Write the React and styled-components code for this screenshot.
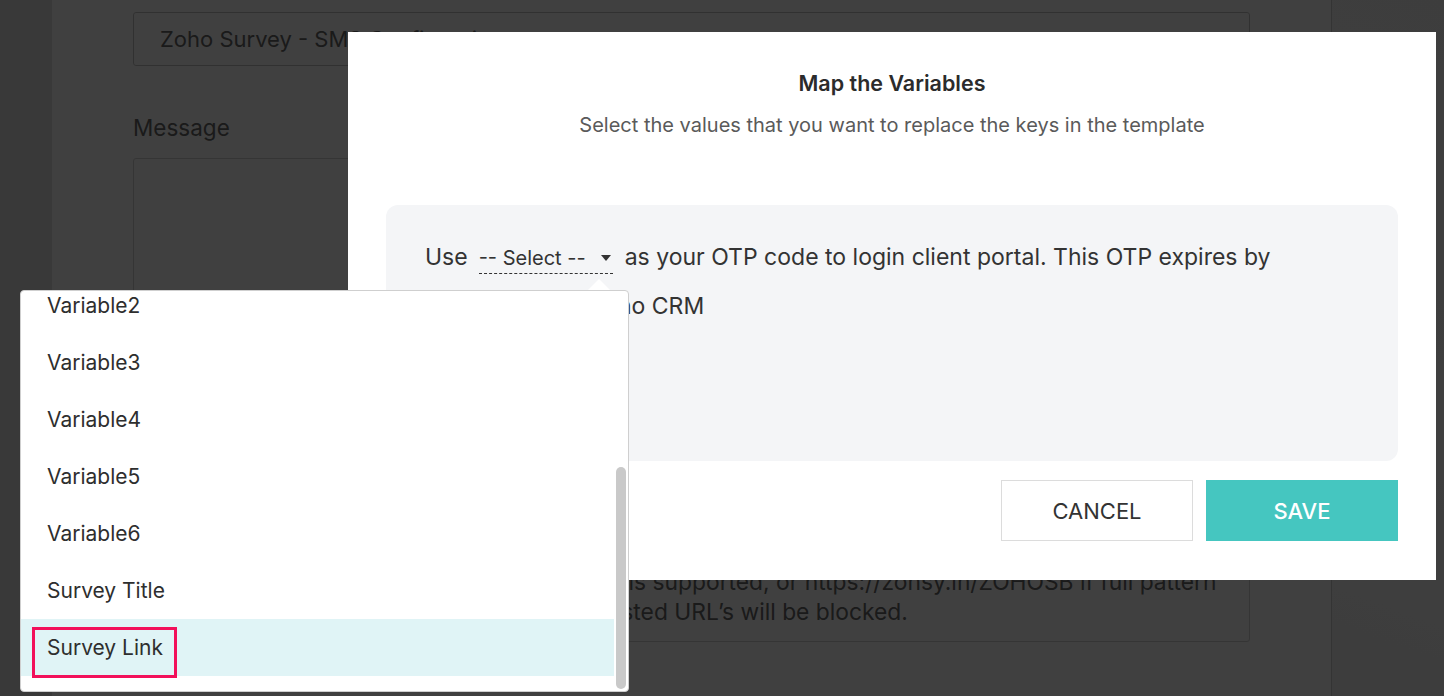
import React from 'react';
import styled, { createGlobalStyle } from 'styled-components';

const GlobalStyle = createGlobalStyle`
  body {
    margin: 0;
    font-family: 'Inter', 'Noto Sans', sans-serif;
    color: #333;
  }
`;

const Page = styled.div`
  position: relative;
  width: 1444px;
  height: 696px;
  overflow: hidden;
  display: flex;
  background: #fff;
`;

const Sidebar = styled.div`
  width: 52px;
  flex-shrink: 0;
  background: #e4e4e4;
`;

const Main = styled.div`
  flex: 1;
  display: flex;
  flex-direction: column;
  padding: 12px 0 0 81px;
`;

const Field = styled.div`
  width: 1117px;
  height: 54px;
  box-sizing: border-box;
  border: 1px solid #c4c4c4;
  border-radius: 3px;
  display: flex;
  align-items: center;
  padding-left: 26px;
  font-size: 22px;
  color: #6a6a6a;
`;

const Label = styled.div`
  margin-top: 48px;
  font-size: 22.5px;
  color: #6a6a6a;
`;

const TextArea = styled.div`
  margin-top: 17px;
  width: 1117px;
  height: 484px;
  box-sizing: border-box;
  border: 1px solid #d4d4d4;
  border-radius: 3px;
  display: flex;
  flex-direction: column;
  justify-content: flex-end;
  padding: 0 0 14px 26px;
  font-size: 22.8px;
  line-height: 30px;
  color: #6a6a6a;
  white-space: nowrap;
`;

const RightRail = styled.div`
  width: 112px;
  flex-shrink: 0;
  border-left: 1px solid #d0d0d0;
  background: linear-gradient(200deg, #f4f4f4 0%, #fafafa 60%, #f2f2f2 100%);
`;

const Backdrop = styled.div`
  position: absolute;
  inset: 0;
  background: rgba(0, 0, 0, 0.75);
`;

const Modal = styled.div`
  position: absolute;
  left: 348px;
  top: 32px;
  width: 1088px;
  height: 548px;
  box-sizing: border-box;
  background: #fff;
  padding: 38px 38px 39px;
  display: flex;
  flex-direction: column;
`;

const Title = styled.h2`
  margin: 0;
  text-align: center;
  font-size: 21.5px;
  font-weight: 600;
  color: #2b2b2b;
  line-height: 26px;
`;

const Subtitle = styled.p`
  margin: 16px 0 0;
  text-align: center;
  font-size: 20px;
  color: #5a5a5a;
  line-height: 26px;
`;

const Template = styled.div`
  margin-top: 67px;
  height: 256px;
  box-sizing: border-box;
  background: #f4f5f7;
  border-radius: 12px;
  padding: 28px 39px;
  font-size: 23px;
  line-height: 49px;
  color: #333;
  white-space: nowrap;
`;

const Picker = styled.span`
  display: inline-flex;
  align-items: center;
  gap: 15px;
  margin: 0 12px 0 11px;
  line-height: 30px;
  border-bottom: 1px dashed #333;
  font-size: 20px;
`;

const Caret = styled.span`
  width: 0;
  height: 0;
  border-left: 5px solid transparent;
  border-right: 5px solid transparent;
  border-top: 6px solid #333;
  margin-right: 2px;
`;

const Actions = styled.div`
  margin-top: 19px;
  display: flex;
  justify-content: flex-end;
  gap: 13px;
`;

const Button = styled.button`
  width: 192px;
  height: 61px;
  font-family: inherit;
  font-size: 22px;
  font-weight: ${p => (p.$primary ? 500 : 400)};
  border: 1px solid ${p => (p.$primary ? '#45c6c0' : '#dcdcdc')};
  background: ${p => (p.$primary ? '#45c6c0' : '#fff')};
  color: ${p => (p.$primary ? '#fff' : '#333')};
  cursor: pointer;
`;

const Menu = styled.div`
  position: absolute;
  left: 20px;
  top: 290px;
  width: 609px;
  height: 402px;
  box-sizing: border-box;
  background: #fff;
  border: 1px solid #cfcfcf;
  border-radius: 4px;
  overflow: hidden;
`;

const MenuArrow = styled.div`
  position: absolute;
  left: 588px;
  top: 279px;
  width: 0;
  height: 0;
  border-left: 11px solid transparent;
  border-right: 11px solid transparent;
  border-bottom: 11px solid #fff;
`;

const Options = styled.ul`
  list-style: none;
  margin: -14px 14px 0 0;
  padding: 0;
`;

const Option = styled.li`
  position: relative;
  height: 57px;
  display: flex;
  align-items: center;
  padding-left: 26px;
  font-size: 21px;
  color: #2e2e2e;
  background: ${p => (p.$active ? '#e0f4f6' : 'transparent')};
`;

const Marker = styled.span`
  position: absolute;
  left: 11px;
  top: 8px;
  width: 145px;
  height: 51px;
  box-sizing: border-box;
  border: 3px solid #f2105a;
`;

const Thumb = styled.div`
  position: absolute;
  right: 2px;
  top: 176px;
  width: 10px;
  height: 222px;
  border-radius: 5px;
  background: #c9c9c9;
`;

const options = ['Variable2', 'Variable3', 'Variable4', 'Variable5', 'Variable6', 'Survey Title', 'Survey Link'];

export default function App() {
  return (
    <>
      <GlobalStyle />
      <Page>
        <Sidebar />
        <Main>
          <Field>Zoho Survey - SMS Confirmation</Field>
          <Label>Message</Label>
          <TextArea>
            <div>Note: Only the default Zoho link shortening is supported, or https://zohsy.in/ZOHOSB if full pattern</div>
            <div>Links other than the zohsy.in and all whitelisted URL’s will be blocked.</div>
          </TextArea>
        </Main>
        <RightRail />

        <Backdrop />

        <Modal>
          <Title>Map the Variables</Title>
          <Subtitle>Select the values that you want to replace the keys in the template</Subtitle>
          <Template>
            Use
            <Picker>
              -- Select --
              <Caret />
            </Picker>
            as your OTP code to login client portal. This OTP expires by
            <br />
            in 15 minutes - Zoho CRM
          </Template>
          <Actions>
            <Button>CANCEL</Button>
            <Button $primary>SAVE</Button>
          </Actions>
        </Modal>

        <MenuArrow />
        <Menu>
          <Options>
            {options.map(name => (
              <Option key={name} $active={name === 'Survey Link'}>
                {name}
                {name === 'Survey Link' && <Marker />}
              </Option>
            ))}
          </Options>
          <Thumb />
        </Menu>
      </Page>
    </>
  );
}
